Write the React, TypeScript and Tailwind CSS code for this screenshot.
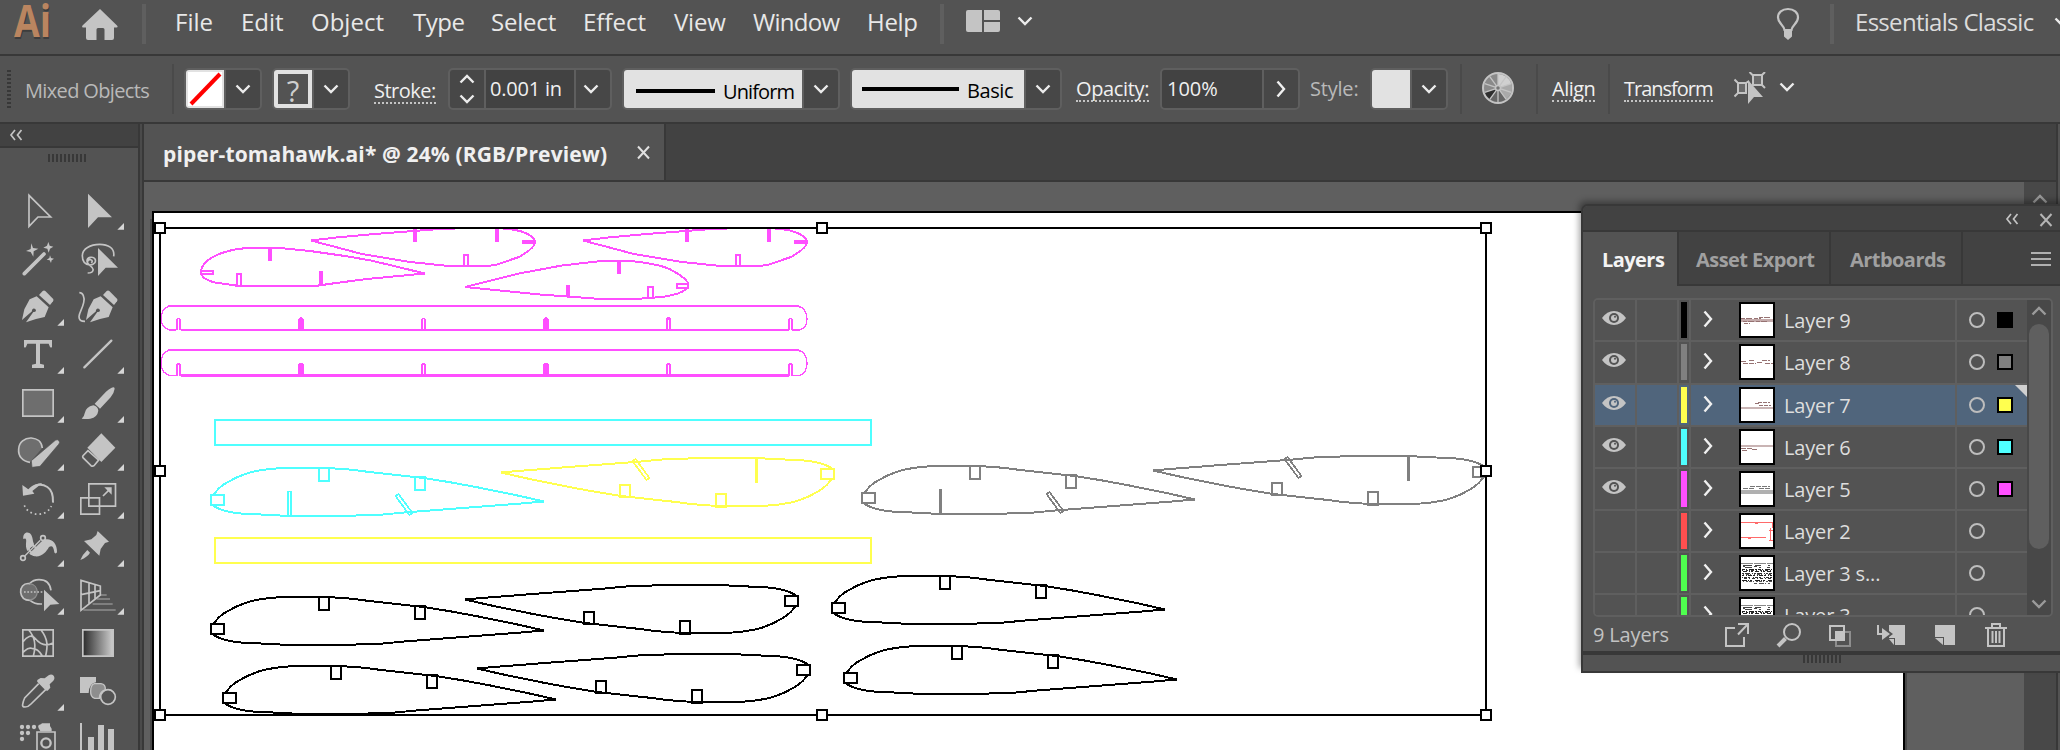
import React from "react";

const FG = "#c4c4c4";

/* ---------- small shared pieces ---------- */

function ChevronDown({ color = "#ececec" }: { color?: string }) {
  return (
    <svg width="16" height="10" viewBox="0 0 16 10" className="block shrink-0">
      <path d="M1.500 1.500L8 8l6.500-6.500" fill="none" stroke={color} strokeWidth="2.400" />
    </svg>
  );
}

function ChevronUp({ color = "#ececec" }: { color?: string }) {
  return (
    <svg width="16" height="10" viewBox="0 0 16 10" className="block shrink-0">
      <path d="M1.500 8.500L8 2l6.500 6.500" fill="none" stroke={color} strokeWidth="2.400" />
    </svg>
  );
}

function ChevronRight() {
  return (
    <svg width="10" height="18" viewBox="0 0 10 18" className="block shrink-0">
      <path d="M1.500 1.500L8 9l-6.500 7.500" fill="none" stroke="#f0f0f0" strokeWidth="2.400" />
    </svg>
  );
}

function CollapseIcon() {
  return (
    <svg width="14" height="12" viewBox="0 0 14 12" className="block shrink-0">
      <path d="M6 1L2 6l4 5M12.500 1l-4 5 4 5" fill="none" stroke={FG} strokeWidth="1.700" />
    </svg>
  );
}

function Separator() {
  return <div className="mt-2 h-[50px] w-[2px] shrink-0 bg-[#4a4a4a]" />;
}

function DropButton() {
  return (
    <div className="flex flex-1 items-center justify-center border-l-2 border-[#5f5f5f] bg-[#474747]">
      <ChevronDown />
    </div>
  );
}

/* ---------- menu bar ---------- */

function MenuBar() {
  return (
    <header className="flex h-[56px] shrink-0 border-b-2 border-[#383838] bg-[#535353] text-[24px] leading-[43px] text-[#e8e8e8]">
      <div className="w-[82px] shrink-0 pl-[14px]">
        <div className="w-[50px] origin-left scale-x-[0.83] text-[45px] leading-[40px] font-bold text-[#ba8560] [text-shadow:1px_2px_0_#3d3d3d]">Ai</div>
      </div>
      <svg width="36" height="32" viewBox="0 0 36 32" className="mt-[9px] shrink-0">
        <path d="M18 0l17 16.500q1.500 2-.5 2H32V29q0 2-2 2h-7.500V20.500q0-1.500-1.500-1.500h-5q-1.500 0-1.500 1.500V31H6q-2 0-2-2V18.500H1q-1.500 0-.5-2z" fill={FG} />
      </svg>
      <div className="mt-1 ml-6 h-10 w-1 shrink-0 bg-[#5f5f5f]" />
      <nav className="flex w-[794px] shrink-0 pl-[29px] whitespace-nowrap">
        <span className="w-[66px] shrink-0">File</span>
        <span className="w-[70px] shrink-0">Edit</span>
        <span className="w-[102px] shrink-0">Object</span>
        <span className="w-[78px] shrink-0 tracking-[-0.500px]">Type</span>
        <span className="w-[92px] shrink-0 tracking-[-0.200px]">Select</span>
        <span className="w-[91px] shrink-0">Effect</span>
        <span className="w-[79px] shrink-0 tracking-[-0.200px]">View</span>
        <span className="w-[114px] shrink-0 tracking-[-0.700px]">Window</span>
        <span className="shrink-0 tracking-[-0.300px]">Help</span>
      </nav>
      <div className="mt-1 h-10 w-1 shrink-0 bg-[#5f5f5f]" />
      <div className="mt-[10px] ml-[22px] flex w-[34px] shrink-0 gap-[2px]">
        <div className="h-[22px] w-4 rounded-l-[2px] bg-[#c4c4c4]" />
        <div className="flex flex-col gap-[2px]">
          <div className="h-[10px] w-4 rounded-tr-[2px] bg-[#c4c4c4]" />
          <div className="h-[10px] w-4 rounded-br-[2px] bg-[#c4c4c4]" />
        </div>
      </div>
      <div className="mt-4 ml-[17px] shrink-0">
        <ChevronDown />
      </div>
      <svg width="24" height="34" viewBox="0 0 24 34" className="mt-[7px] ml-[743px] shrink-0">
        <path d="M8.500 23C8 18 2 16.500 2 10.500 2 5.500 6 2 12 2s10 3.500 10 8.500c0 6-6 7.500-6.500 12.500z" fill="none" stroke={FG} strokeWidth="2.200" />
        <path d="M8 23h8v6.500L12 33l-4-3.500z" fill={FG} />
      </svg>
      <div className="mt-1 ml-[30px] h-10 w-1 shrink-0 bg-[#5f5f5f]" />
      <div className="w-[220px] shrink-0 pl-[21px] tracking-[-0.700px] whitespace-nowrap text-[#dcdcdc]">
        Essentials Classic
      </div>
      <div className="mt-[17px] shrink-0">
        <ChevronDown />
      </div>
    </header>
  );
}

/* ---------- control bar ---------- */

function OptionsBar() {
  return (
    <div className="flex h-[68px] shrink-0 items-start border-b-2 border-[#383838] bg-[#535353] text-[20px] leading-[24px] whitespace-nowrap text-[#f0f0f0]">
      <div className="mt-[14px] ml-[7px] h-[38px] w-1 shrink-0 bg-[repeating-linear-gradient(#383838_0_2px,#535353_2px_4px)]" />
      <div className="mt-[23px] ml-[14px] w-[147px] shrink-0 tracking-[-0.650px] text-[#b9b9b9]">Mixed Objects</div>
      <Separator />
      <div className="mt-3 ml-[10px] flex h-[42px] w-[78px] shrink-0 overflow-hidden rounded-[5px] border-2 border-[#5f5f5f]">
        <svg width="38" height="38" viewBox="0 0 38 38" className="shrink-0">
          <path d="M0 0h38v38H0z" fill="#e2e2e2" />
          <path d="M2 2h34v34H2z" fill="#fff" />
          <path d="M5 34L34 4" stroke="#f00" strokeWidth="4" />
        </svg>
        <DropButton />
      </div>
      <div className="mt-3 ml-[10px] flex h-[42px] w-[78px] shrink-0 overflow-hidden rounded-[5px] border-2 border-[#5f5f5f]">
        <div className="h-[38px] w-[38px] shrink-0 border-4 border-[#e2e2e2] bg-[#535353] text-center text-[29px] leading-[34px] text-[#cfcfcf]">
          ?
        </div>
        <DropButton />
      </div>
      <div className="mt-[23px] ml-[24px] w-[74px] shrink-0 tracking-[-0.500px]">
        <span className="inline-block h-[25px] border-b-2 border-dotted border-[#c4c4c4]">Stroke:</span>
      </div>
      <div className="mt-3 flex h-[42px] w-[164px] shrink-0 overflow-hidden rounded-[5px] border-2 border-[#5f5f5f] bg-[#474747]">
        <div className="flex w-[34px] shrink-0 flex-col items-center gap-[10px] pt-1">
          <ChevronUp />
          <ChevronDown />
        </div>
        <div className="w-[90px] shrink-0 border-l-2 border-[#5f5f5f] bg-[#424242] pt-[7px] pl-[4px] tracking-[-0.200px]">0.001 in</div>
        <div className="flex flex-1 items-center border-l-2 border-[#5f5f5f] pl-[7px]">
          <ChevronDown />
        </div>
      </div>
      <div className="mt-3 ml-[10px] flex h-[42px] w-[218px] shrink-0 overflow-hidden rounded-[5px] border-2 border-[#5f5f5f]">
        <div className="flex w-[178px] shrink-0 bg-[#e2e2e2] pl-3 text-black">
          <div className="mt-[19px] mr-2 h-1 w-[79px] shrink-0 bg-black" />
          <span className="pt-[10px] tracking-[-0.900px]">Uniform</span>
        </div>
        <DropButton />
      </div>
      <div className="mt-3 ml-[10px] flex h-[42px] w-[212px] shrink-0 overflow-hidden rounded-[5px] border-2 border-[#5f5f5f]">
        <div className="flex w-[172px] shrink-0 bg-[#e2e2e2] pl-[10px] text-black">
          <div className="mt-[17px] mr-2 h-1 w-[97px] shrink-0 bg-black" />
          <span className="pt-[9px] tracking-[-0.400px]">Basic</span>
        </div>
        <DropButton />
      </div>
      <div className="mt-[21px] ml-[14px] w-[84px] shrink-0 tracking-[-0.350px]">
        <span className="inline-block h-[25px] border-b-2 border-dotted border-[#c4c4c4]">Opacity:</span>
      </div>
      <div className="mt-3 flex h-[42px] w-[140px] shrink-0 overflow-hidden rounded-[5px] border-2 border-[#5f5f5f]">
        <div className="w-[100px] shrink-0 bg-[#424242] pt-[7px] pl-[5px]">100%</div>
        <div className="flex flex-1 items-center justify-center border-l-2 border-[#5f5f5f] bg-[#474747]">
          <ChevronRight />
        </div>
      </div>
      <div className="mt-[21px] ml-[10px] w-[60px] shrink-0 tracking-[-0.200px] text-[#b9b9b9]">Style:</div>
      <div className="mt-3 flex h-[42px] w-[78px] shrink-0 overflow-hidden rounded-[5px] border-2 border-[#5f5f5f]">
        <div className="w-[38px] shrink-0 bg-[#e2e2e2]" />
        <DropButton />
      </div>
      <div className="w-3 shrink-0" />
      <Separator />
      <svg width="32" height="32" viewBox="0 0 32 32" className="mt-4 ml-5 shrink-0">
        <circle cx="16" cy="16" r="15" fill="#8a8a8a" stroke="#c4c4c4" strokeWidth="2" />
        <path d="M16 16L16 2A14 14 0 0 1 29.300 11.700z" fill="#d0d0d0" />
        <path d="M16 16l13.300-4.300A14 14 0 0 1 24.200 27.300z" fill="#a9a9a9" />
        <path d="M16 16L7.800 27.300A14 14 0 0 1 2.700 20.300z" fill="#2e2e2e" />
        <path d="M16 16l8.200 11.300A14 14 0 0 1 7.800 27.300z" fill="#666" />
        <path d="M16 2v28M2.700 11.700l26.600 8.600M2.700 20.300l26.600-8.600M7.800 4.700l16.400 22.600M7.800 27.300L24.200 4.700" stroke="#c4c4c4" strokeWidth="1.300" />
        <circle cx="16" cy="16" r="2.500" fill="#777" stroke="#c4c4c4" strokeWidth="1.500" />
      </svg>
      <div className="w-[22px] shrink-0" />
      <Separator />
      <div className="mt-[21px] ml-[14px] w-[56px] shrink-0 tracking-[-0.500px]">
        <span className="inline-block h-[25px] border-b-2 border-dotted border-[#c4c4c4]">Align</span>
      </div>
      <Separator />
      <div className="mt-[21px] ml-[14px] w-[110px] shrink-0 tracking-[-1px]">
        <span className="inline-block h-[25px] border-b-2 border-dotted border-[#c4c4c4]">Transform</span>
      </div>
      <svg width="32" height="32" viewBox="0 0 32 32" className="mt-4 shrink-0">
        <path d="M4 11h8v10H4zM19 3h9v10h-9z" fill="#6a6a6a" stroke={FG} strokeWidth="2" />
        <path d="M.5 7.500l3 3M.5 24.500l3-3M15.500 0l3 3M31 0l-3 3M31 16l-3-3M12 11l3-2M19 13l-3 2" stroke={FG} strokeWidth="2" />
        <path d="M14 8v24l6-7h9z" fill={FG} />
      </svg>
      <div className="mt-[26px] ml-[13px] shrink-0">
        <ChevronDown />
      </div>
    </div>
  );
}

/* ---------- tools panel ---------- */

type Tool = { box: string; more?: boolean; art: React.ReactNode };

const line = { fill: "none", stroke: FG, strokeWidth: 5 } as const;
const solid = { fill: FG } as const;

const penNib = (
  <>
    <path {...solid} d="M128 333q4-3 8 0l23 23q3 4 0 8l-9 11-33-30z" />
    <path {...solid} d="M110 349l36 33-12 29-26 6-30 10 22-31q6 1 8-4-1-8-9-6-5 3-3 8L66 420l7-32 16-30z" />
  </>
);

const tools: Tool[] = [
  { box: "27 15 180 144", art: <path {...line} d="M87 46v93l27-28h38z" /> },
  { box: "207 15 180 144", more: true, art: <path {...solid} d="M264 41v103l30-32h42z" /> },
  {
    box: "27 159 180 144",
    art: (
      <>
        <path d="M73 281l59-59" stroke={FG} strokeWidth="11" strokeLinecap="round" />
        <path {...solid} d="M94 190l5 14 16 2-14 8-1 16-8-14-14-3 14-6zM145 186l4 11 11 3-10 6-4 12-4-12-12-3 11-6zM150 226l3 8 9 2-7 5-2 8-4-8-9-2 8-5z" />
      </>
    ),
  },
  {
    box: "207 159 180 144",
    art: (
      <>
        <path {...line} d="M341 229c4-26-18-36-42-36-28 0-52 14-52 34 0 16 8 26 22 28 14 0 20-10 16-18-6-9-24-6-24 6 0 14 22 16 18 28q-2 8-16 8M262 247q2-10 10-8 8 3 2 10" />
        <path {...solid} d="M294 204v84l23-25h37z" />
      </>
    ),
  },
  { box: "27 303 180 144", more: true, art: penNib },
  {
    box: "207 303 180 144",
    art: (
      <>
        <path {...line} d="M238 338c10 0 17 12 13 30-4 20-14 30-14 42 0 10 6 14 18 14" />
        <g transform="translate(192 0)">{penNib}</g>
      </>
    ),
  },
  {
    box: "27 447 180 144",
    more: true,
    art: <path {...solid} d="M72 480h84v21q-2 3-6 0l-4-10h-26v60l12 3v10H96v-10l12-3v-60H82l-4 10q-4 3-6 0z" />,
  },
  {
    box: "207 447 180 144",
    more: true,
    art: <path d="M253 562l81-80" stroke={FG} strokeWidth="7" strokeLinecap="round" />,
  },
  {
    box: "27 594 180 144",
    more: true,
    art: <path d="M68.500 629.500h91v79h-91z" fill="#6e6e6e" stroke={FG} strokeWidth="5" />,
  },
  {
    box: "207 594 180 144",
    more: true,
    art: (
      <>
        <path {...solid} d="M335 623q8-4 9 3-2 14-12 26l-32 34-16-15 34-36q8-8 17-12z" />
        <path {...solid} d="M280 676q14 4 15 16-3 20-24 24-12 2-26 0 8-6 9-16 4-20 26-24z" />
      </>
    ),
  },
  {
    box: "27 738 180 144",
    more: true,
    art: (
      <>
        <path d="M90 847c-22-3-36-18-34-40 1-20 18-34 38-33 17 1 31 11 33 30z" fill="#6e6e6e" />
        <path {...line} d="M90 847c-22-3-36-18-34-40 1-20 18-34 38-33 17 1 31 11 33 30" />
        <path {...solid} d="M166 781q6-4 11 1 4 6-1 11l-56 66-24 3-2-20z" stroke="#535353" strokeWidth="2" />
      </>
    ),
  },
  {
    box: "207 738 180 144",
    more: true,
    art: (
      <>
        <path {...solid} d="M304 760l42 43-42 43-42-43z" />
        <path {...line} d="M264 812l-15 15q-2 3 0 6l24 24q5 3 9 0l14-17z" />
      </>
    ),
  },
  {
    box: "27 42 180 144",
    more: true,
    art: (
      <>
        <path d="M86 91c14-18 38-22 56-10 14 9 18 24 17 47" fill="none" stroke={FG} strokeWidth="6" />
        <path {...solid} d="M67 75l20 14q16-19 40-20l-30 24 6 8-34 6z" />
        <path d="M73 136C86 170 140 172 154 138" fill="none" stroke={FG} strokeWidth="5" strokeDasharray="5 9" />
      </>
    ),
  },
  {
    box: "207 42 180 144",
    more: true,
    art: (
      <>
        <path {...line} d="M266.500 71.500h80v67h-80zM242.500 113.500h56v49h-56zM309 108l20-20" />
        <path {...solid} d="M313 82h22v22z" />
      </>
    ),
  },
  {
    box: "27 186 180 144",
    more: true,
    art: (
      <>
        <path {...solid} d="M70 237c-3-18 14-26 24-12 6 12 3 20 10 30 8 3 16-10 28-16 22-6 40 10 39 38-2 5-7 4-8 0-2-18-8-22-16-16-8 14-20 30-42 28-14-2-22-10-26-24-3-16 2-24-2-28-2-3-4 0-7 0z" />
        <path d="M72 290l52-52" stroke="#535353" strokeWidth="9" />
        <path {...line} d="M75 287l46-46" strokeWidth={4} />
        <circle {...line} cx="69" cy="294" r="7" />
        <circle {...line} cx="129" cy="234" r="7" />
        <circle {...line} cx="97" cy="267" r="10" />
      </>
    ),
  },
  {
    box: "207 186 180 144",
    more: true,
    art: (
      <>
        <path {...solid} d="M293 213l34 32-12 4-13 18-4 20-46-44 22-5 15-13z" />
        <path {...solid} d="M262 270l8 8q-6 12-29 22 6-16 21-30z" />
      </>
    ),
  },
  {
    box: "27 330 180 144",
    more: true,
    art: (
      <>
        <circle cx="86" cy="396" r="25" fill="#6e6e6e" />
        <path {...line} d="M153 391c-3-22-18-32-36-32-14 0-22 5-28 12-20-3-28 13-27 26 2 18 14 24 28 24 10 8 18 12 36 11" />
        <path d="M89 371c30 4 30 46 0 49" fill="none" stroke="#8e8e8e" strokeWidth="4" />
        <path d="M72 396h58" stroke={FG} strokeWidth="5" strokeDasharray="5 5" />
        <path {...solid} d="M132 389v65l19-20 27-2z" />
      </>
    ),
  },
  {
    box: "207 330 180 144",
    more: true,
    art: (
      <>
        <path d="M302 405h18M290 417h40M278 432h60M250 450h97" stroke="#8e8e8e" strokeWidth="5" />
        <path {...line} d="M243 361l58 17v27l-58 46zM267 369v62M285 374v45M243 404l58-12" />
      </>
    ),
  },
  {
    box: "27 474 180 144",
    art: (
      <path {...line} d="M68.500 509.500h91v79h-91zM86 510c22 24 22 50 14 78M123 510c22 28 20 50 14 78M69 545c12-16 26-22 36-10 18 22 36 24 54 14M69 577c10-8 14-16 26-12 16 0 26 12 32 23" />
    ),
  },
  {
    box: "207 474 180 144",
    art: (
      <>
        <defs>
          <linearGradient id="toolGradient">
            <stop offset="0" stopColor="#2b2b2b" />
            <stop offset="1" stopColor="#cfcfcf" />
          </linearGradient>
        </defs>
        <path d="M248.500 509.500h91v79h-91z" fill="url(#toolGradient)" stroke={FG} strokeWidth="5" />
      </>
    ),
  },
  {
    box: "27 618 180 144",
    more: true,
    art: (
      <>
        <path {...solid} d="M146 646q8-6 15 1 5 8-1 15l-11 11 2 10-8 9q-5 1-8-3l-22-22q-4-5 0-8l9-5 12 1z" />
        <path {...line} d="M116 671l-42 43q-4 8-6 19-2 8 7 8 10 0 18-9l44-43" />
      </>
    ),
  },
  {
    box: "207 618 180 144",
    art: (
      <>
        <path {...solid} d="M240 651h48v16q-20 2-22 32h-26z" />
        <path d="M283 671h20q14 2 13 18-18 6-18 26h-14q-13-4-12-22 0-18 11-22z" fill="#8e8e8e" stroke={FG} strokeWidth="4" />
        <circle cx="324" cy="711" r="22" fill="#535353" stroke={FG} strokeWidth="5" />
      </>
    ),
  },
  {
    box: "27 762 180 144",
    art: (
      <>
        <path {...solid} d="M126 790h24v8l5 8v8h-34l-4-8v-8z" />
        <path {...line} d="M111 816h54v80h-54z" />
        <circle cx="138" cy="849" r="14" fill="none" stroke={FG} strokeWidth="7" />
        <g {...solid}>
          <circle cx="66" cy="801" r="6.500" />
          <circle cx="84" cy="801" r="6.500" />
          <circle cx="102" cy="801" r="6.500" />
          <circle cx="66" cy="819" r="6.500" />
          <circle cx="84" cy="819" r="6.500" />
          <circle cx="66" cy="837" r="6.500" />
          <circle cx="121" cy="800" r="6.500" />
        </g>
      </>
    ),
  },
  {
    box: "207 762 180 144",
    art: <path {...solid} d="M240 789h6v100h-6zM264 831h18v60h-18zM294 795h18v96h-18zM324 807h18v84h-18z" />,
  },
];

function ToolsPanel() {
  return (
    <aside className="flex w-[138px] shrink-0 flex-col bg-[#535353]">
      <div className="flex h-6 shrink-0 border-b-2 border-[#383838] bg-[#424242] pt-[5px] pl-[9px]">
        <CollapseIcon />
      </div>
      <div className="mt-[6px] ml-12 h-2 w-[38px] shrink-0 bg-[repeating-linear-gradient(90deg,#383838_0_2px,#535353_2px_4px)]" />
      <div className="mt-[23px] ml-[9px] grid w-[120px] shrink-0 grid-cols-[60px_60px] gap-0">
        {tools.map((t, i) => (
          <div key={i} className={i === 8 || i === 9 ? "flex h-[49px] items-end" : "flex h-12 items-end"}>
            <svg width="60" height="48" viewBox={t.box} className="block">
              {t.art}
              {t.more && (
                <path
                  fill="#d6d6d6"
                  d="M0 0v-20l-20 20z"
                  transform={`translate(${Number(t.box.split(" ")[0]) + 165} ${Number(t.box.split(" ")[1]) + 134})`}
                />
              )}
            </svg>
          </div>
        ))}
      </div>
    </aside>
  );
}

/* ---------- artboard ---------- */

const RIB =
  "M213 496C217 489 221 486 226 483Q236 477 248 473Q262 469 284 468L325 468Q350 469 369 472L424 478Q450 482 476 487L520 496L544 501.500L521 503.500L476 507L404 512.500L378 515L335 516L290 516L241 513.500Q222 512 212 505";

function Rib({ dx = 0, dy = 0, flip = false, color, struts }: { dx?: number; dy?: number; flip?: boolean; color: string; struts?: "hollow" | "filled" }) {
  const place = flip ? `translate(${1045 + dx} ${974 + dy}) rotate(180)` : `translate(${dx} ${dy})`;
  return (
    <g transform={place} fill="none" stroke={color} strokeWidth="2">
      <path d={RIB} strokeWidth="2" />
      <path d="M211 495h13v10h-13zM319 467.500h10v13h-10zM415 477h10v12.500h-10z" />
      {struts === "hollow" && <path d="M288 516v-24.500h3V516" strokeWidth="1.600" />}
      {struts === "filled" && <path d="M289 491v25" strokeWidth="3" />}
      {struts && <path d="M395.500 496l14 19 3-2L398.500 494z" strokeWidth="1.700" />}
    </g>
  );
}

const SLOTS = [178.500, 301, 423.500, 546, 668.500, 790.500];

function Spar({ top, bottom, base }: { top: number; bottom: number; base: number }) {
  return (
    <g fill="none" stroke="#ff4fff">
      <path d={`M169 ${top}H798`} strokeWidth="2" />
      <path d={`M181 ${bottom}H789`} strokeWidth={base} />
      <path
        d={`M169 ${top}Q161 ${top + 3} 161 ${top + 13}Q161 ${bottom - 2} 170 ${bottom}H176M798 ${top}Q807 ${top + 3} 807 ${top + 13}Q807 ${bottom - 2} 799 ${bottom}H792`}
        strokeWidth="1.400"
      />
      {SLOTS.map((x, i) => (
        <path
          key={x}
          d={`M${x - 1.500} ${bottom}v-10.500l1-1h1l1 1v10.500`}
          strokeWidth={i === 0 || i === 5 || i === 2 ? "1.600" : "2.200"}
        />
      ))}
    </g>
  );
}

const WING_TOP =
  "M311 240.500L336 237.500L375 234L414 231L440 229L470 228H490Q512 228 523 232Q534 236 535 242Q535 248 519 257L497 264.500L488 266H449L410 262L362 254ZM414 229h2v12h-2zM496 229h2v12h-2zM523 241h12v2h-12zM463.500 266v-11h4v11";
const WING_LEFT =
  "M201 272Q202 260 222 253Q236 248 252 248H280L310 251L345 256L371 260.500L425 273.500L367 279L336 283L315 286H239L215 282.500Q201 279 201 272ZM269 248h2v12h-2zM201 270.500h12v3.500h-12zM237 286v-12h4v12M320 284v-12h2v12";
const WING_LOW =
  "M465 287L519 273.500L562 265.500L601 261H630Q662 264 673 271Q688 279 688.500 285Q688 293 662 297L636 299H601L540 294.500ZM618 261h2v12h-2zM677 284h11v4h-11zM567 297v-11h2v11M648 298v-11h4.500v11";

function Canvas() {
  const handles = [
    [160, 228], [822, 228], [1486, 228],
    [160, 471], [1486, 471],
    [160, 715], [822, 715], [1486, 715],
  ];
  return (
    <svg width="1880" height="568" viewBox="144 182 1880 568" className="block shrink-0 bg-[#5f5f5f]" shapeRendering="crispEdges">
      <path d="M150 219h1757v531H150z" fill="#484848" />
      <path d="M152 211h1753v539H152z" fill="#000" />
      <path d="M154 213h1749v537H154z" fill="#fff" />
      <g fill="none" stroke="#ff4fff" strokeWidth="2">
        <path d={WING_TOP} />
        <path d={WING_TOP} transform="translate(272 0)" />
        <path d={WING_LEFT} />
        <path d={WING_LOW} />
      </g>
      <Spar top={306} bottom={330} base={2} />
      <Spar top={350} bottom={375.500} base={3} />
      <path d="M215 420h656v25H215z" fill="none" stroke="#4fffff" strokeWidth="2" />
      <path d="M215 538h656v25H215z" fill="none" stroke="#ffff4f" strokeWidth="2" />
      <Rib color="#4fffff" struts="hollow" />
      <Rib color="#ffff4f" flip struts="filled" />
      <Rib color="#808080" dx={651} dy={-2} struts="filled" />
      <Rib color="#808080" dx={652} dy={-2} flip struts="filled" />
      <Rib color="#000" dy={129} />
      <Rib color="#000" dx={12} dy={198} />
      <Rib color="#000" dx={621} dy={108} />
      <Rib color="#000" dx={633} dy={178} />
      <Rib color="#000" dx={-36} dy={127} flip />
      <Rib color="#000" dx={-24} dy={196} flip />
      <path d="M160 228h1326v487H160z" fill="none" stroke="#000" strokeWidth="2" />
      {handles.map(([x, y]) => (
        <rect key={`${x}-${y}`} x={x - 5} y={y - 5} width="10" height="10" fill="#fff" stroke="#000" strokeWidth="2" />
      ))}
    </svg>
  );
}

function DocumentArea() {
  return (
    <main className="flex w-[1912px] shrink-0 flex-col">
      <div className="flex h-[58px] shrink-0 border-b-2 border-[#383838] bg-[#424242]">
        <div className="flex w-[522px] shrink-0 border-r-2 border-[#383838] bg-[#535353] pl-[19px]">
          <span className="w-[473px] shrink-0 pt-[4px] text-[21px] leading-[53px] font-bold tracking-[0.130px] whitespace-nowrap text-[#f0f0f0]">
            piper-tomahawk.ai* @ 24% (RGB/Preview)
          </span>
          <svg width="15" height="15" viewBox="0 0 15 15" className="mt-[21px] shrink-0">
            <path d="M2 1.500l11 12M13 1.500l-11 12" stroke="#e0e0e0" strokeWidth="2" />
          </svg>
        </div>
      </div>
      <div className="flex h-[568px] shrink-0">
        <Canvas />
        <div className="flex w-8 shrink-0 flex-col items-center bg-[#484848] pt-3">
          <ChevronUp color="#9a9a9a" />
        </div>
      </div>
    </main>
  );
}

/* ---------- layers panel ---------- */

function Eye({ hole }: { hole: string }) {
  return (
    <svg width="24" height="14" viewBox="0 0 24 14" className="block">
      <path d="M0 7Q5 0 12 0t12 7q-5 7-12 7T0 7z" fill={FG} />
      <circle cx="12" cy="7" r="5" fill={hole} />
      <circle cx="12" cy="7" r="3" fill={FG} />
      <circle cx="13" cy="5.800" r="1" fill={hole} />
    </svg>
  );
}

const denseSheet = (
  <>
    <path d="M0 6.500h32" stroke="#888" strokeDasharray="12 1" />
    <path d="M2 8.500h9M14 8.500h6M27 8.500h2M4 10.500h7M13 9.500h3M2 9.500h2M26 10.500h3M18 10.500h2" stroke="#444" />
    <path d="M1 12.500h30" stroke="#222" strokeDasharray="3 1 1 2 5 1 2 1" />
    <path d="M1 13.500h30" stroke="#333" strokeDasharray="1 3 2 1 1 1 3 2" />
    <path d="M2 14.500h29" stroke="#222" strokeDasharray="4 2 1 1 2 2" />
    <path d="M1 16.500h30" stroke="#333" strokeDasharray="2 1 5 2 1 1" />
    <path d="M2 17.500h29" stroke="#555" strokeDasharray="1 2 3 1 1 3" />
    <path d="M1 18.500h30" stroke="#222" strokeDasharray="2 2 1 1 4 1" />
    <path d="M1 20.500h30" stroke="#333" strokeDasharray="1 1 3 1 2 3" />
    <path d="M3 21.500h27" stroke="#333" strokeDasharray="3 2 1 2" />
    <path d="M1 23.500h30" stroke="#222" strokeDasharray="5 1 1 1 2 3" />
    <path d="M2 24.500h29" stroke="#555" strokeDasharray="1 2 2 1 3 1" />
    <path d="M13 26.500h16" stroke="#555" strokeDasharray="3 2 5 1 1 2" />
  </>
);

const layers = [
  {
    name: "Layer 9", color: "bg-black", eye: true, swatch: true,
    art: <><path d="M0 16.500h32" stroke="#c4abab" strokeWidth="3" /><path d="M0 14.500h20M2 17.500h26M18 13.500h12M3 19.500h6" stroke="#967272" strokeDasharray="4 1 6 2" /></>,
  },
  {
    name: "Layer 8", color: "bg-[#808080]", eye: true, swatch: true,
    art: <path d="M0 15.500h6M8 14.500h6M2 17.500h13M16 16.500h6M21 14.500h8M24 17.500h8" stroke="#967272" strokeDasharray="5 1" />,
  },
  {
    name: "Layer 7", color: "bg-[#ffff4f]", eye: true, swatch: true,
    art: <><path d="M14 14.500h5M17 13.500h12M18 16.500h12" stroke="#967272" strokeDasharray="4 1" /><path d="M0 18.500h32" stroke="#c9b4b4" strokeWidth="2" /></>,
  },
  {
    name: "Layer 6", color: "bg-[#4fffff]", eye: true, swatch: true,
    art: <><path d="M0 14.500h32" stroke="#c9b4b4" strokeWidth="2" /><path d="M0 17.500h11M1 19.500h6M11 18.500h5" stroke="#967272" strokeDasharray="5 1" /></>,
  },
  {
    name: "Layer 5", color: "bg-[#ff4fff]", eye: true, swatch: true,
    art: <><path d="M2 15.500h12M9 13.500h20M18 15.500h12" stroke="#777" strokeDasharray="5 1" /><path d="M0 18.500h32" stroke="#b0b0b0" strokeWidth="4" /></>,
  },
  {
    name: "Layer 2", color: "bg-[#ff4f4f]", eye: false, swatch: false,
    art: <path d="M0 7.500h32M14 8.500h3M31.500 7v6M29.500 13v12M0 22.500h25M7 23.500h3M28 15.500h4M28 25.500h4" stroke="#ff6a6a" />,
  },
  { name: "Layer 3 s...", color: "bg-[#4fff4f]", eye: false, swatch: false, art: denseSheet },
  { name: "Layer 3", color: "bg-[#4fff4f]", eye: false, swatch: false, art: denseSheet },
];

function LayerRow({ index }: { index: number }) {
  const layer = layers[index];
  const active = index === 2;
  return (
    <div
      className={
        "flex shrink-0 border-b-2 border-[#5f5f5f] " +
        (index === 1 ? "h-[43px] " : "h-[42px] ") +
        (active ? "bg-[#50657c]" : "bg-[#535353]")
      }
    >
      <div className="w-10 shrink-0 pt-[11px] pl-[7px]">{layer.eye && <Eye hole={active ? "#50657c" : "#535353"} />}</div>
      <div className="w-11 shrink-0 border-x-2 border-[#5f5f5f]" />
      <div className="h-full w-[10px] shrink-0 px-[2px] py-[2px]">
        <div className={"h-9 w-[6px] " + layer.color} />
      </div>
      <div className="flex w-[268px] shrink-0 border-x-2 border-[#5f5f5f] pl-3">
        <div className="mt-[10px] w-9 shrink-0">
          <ChevronRight />
        </div>
        <div className="mt-[2px] h-9 w-9 shrink-0 border-2 border-black bg-white">
          <svg width="32" height="32" viewBox="0 0 32 32" fill="none" className="block" shapeRendering="crispEdges">
            {layer.art}
          </svg>
        </div>
        <span className="pl-[9px] text-[20px] leading-[41px] tracking-[-0.150px] whitespace-nowrap text-[#dedede]">{layer.name}</span>
      </div>
      <div className="flex flex-1 pl-3">
        <div className="mt-3 mr-3 h-4 w-4 shrink-0 rounded-full border-2 border-[#bdbdbd]" />
        {layer.swatch && <div className={"mt-3 h-4 w-4 shrink-0 border-2 border-black " + layer.color} />}
        {active && (
          <svg width="12" height="12" viewBox="0 0 12 12" className="ml-auto shrink-0">
            <path d="M0 0h12v12z" fill="#d0d0d0" />
          </svg>
        )}
      </div>
    </div>
  );
}

function LayersPanel() {
  return (
    <section className="absolute top-[204px] left-[1581px] flex h-[469px] w-[490px] flex-col rounded-tl-[7px] border-2 border-[#383838] bg-[#535353] shadow-[-3px_-4px_6px_-1px_rgba(0,0,0,0.35)]">
      <div className="flex h-[26px] shrink-0 rounded-tl-[5px] border-b-2 border-[#383838] bg-[#424242] pt-[7px] pl-[422px]">
        <CollapseIcon />
        <svg width="14" height="14" viewBox="0 0 14 14" className="ml-[20px] shrink-0">
          <path d="M1.500 1l11 12M12.500 1l-11 12" stroke="#b5b5b5" strokeWidth="2" />
        </svg>
      </div>
      <div className="flex h-[54px] shrink-0 bg-[#535353] text-[20px] leading-[56px] font-bold tracking-[-0.550px] whitespace-nowrap text-[#a0a0a0]">
        <div className="w-[94px] shrink-0 pl-[19px] text-[#f4f4f4]">Layers</div>
        <div className="w-[154px] shrink-0 border-x-2 border-b-2 border-[#383838] bg-[#424242] pl-[17px]">Asset Export</div>
        <div className="w-[132px] shrink-0 border-r-2 border-b-2 border-[#383838] bg-[#424242] pl-[19px]">Artboards</div>
        <div className="flex-1 border-b-2 border-[#383838] bg-[#424242] pt-5 pl-[68px]">
          <div className="h-[2px] w-5 bg-[#b0b0b0]" />
          <div className="mt-1 h-[2px] w-5 bg-[#b0b0b0]" />
          <div className="mt-1 h-[2px] w-5 bg-[#b0b0b0]" />
        </div>
      </div>
      <div className="mt-3 ml-[10px] flex h-[319px] w-[460px] shrink-0 overflow-hidden rounded-[5px] border-2 border-[#5f5f5f]">
        <div className="flex w-[432px] shrink-0 flex-col">
          {layers.map((l, i) => (
            <LayerRow key={l.name} index={i} />
          ))}
        </div>
        <div className="flex flex-1 flex-col items-center bg-[#484848] pt-[6px]">
          <ChevronUp color="#9a9a9a" />
          <div className="mt-2 h-[225px] w-5 shrink-0 rounded-full bg-[#5f5f5f]" />
          <div className="mt-[50px]">
            <ChevronDown color="#9a9a9a" />
          </div>
        </div>
      </div>
      <div className="flex h-[38px] shrink-0 border-b-4 border-[#383838] pt-[6px]">
        <span className="w-[142px] shrink-0 pl-[10px] text-[20px] leading-[24px] tracking-[-0.150px] whitespace-nowrap text-[#c2c2c2]">9 Layers</span>
        <svg width="24" height="25" viewBox="0 0 24 25" fill="none" stroke={FG} strokeWidth="2" className="shrink-0">
          <path d="M10 5H1v18h18v-9M13 1h10v10M22.500 1.500L13 11.500" />
        </svg>
        <svg width="26" height="25" viewBox="0 0 26 25" fill="none" stroke={FG} className="ml-[27px] shrink-0">
          <circle cx="16" cy="9" r="8" strokeWidth="2" />
          <path d="M9.500 15.500L2 23" strokeWidth="4" />
        </svg>
        <svg width="23" height="25" viewBox="0 0 23 25" fill="none" className="ml-[27px] shrink-0">
          <path d="M7 9h14v14H7z" stroke="#8e8e8e" strokeWidth="2" />
          <path d="M6 8h10v10H6z" fill={FG} />
          <path d="M1 3h14v14H1z" stroke={FG} strokeWidth="2" />
        </svg>
        <svg width="28" height="25" viewBox="0 0 28 25" className="ml-[25px] shrink-0">
          <path d="M1 2v9h6" fill="none" stroke={FG} strokeWidth="2" />
          <path d="M5 5l8 6-8 6z" fill={FG} />
          <path d="M12 2h16v20H18v-7h-6v-1l4-3-4-3z" fill={FG} />
          <path d="M12 16h5v6z" fill={FG} />
        </svg>
        <svg width="20" height="25" viewBox="0 0 20 25" className="ml-[30px] shrink-0">
          <path d="M0 2h20v20H9v-8H0z" fill={FG} />
          <path d="M0 15h8v7z" fill={FG} />
        </svg>
        <svg width="22" height="25" viewBox="0 0 22 25" fill="none" stroke={FG} strokeWidth="2" className="ml-[30px] shrink-0">
          <path d="M0 5h22M7 5V1h8v4M3 5v18h16V5M7.500 8v12M11 8v12M14.500 8v12" />
        </svg>
      </div>
      <div className="ml-[220px] h-2 w-[38px] shrink-0 bg-[repeating-linear-gradient(90deg,#383838_0_2px,#535353_2px_4px)]" />
    </section>
  );
}

export default function App() {
  return (
    <div className="relative flex h-[750px] w-[2060px] flex-col overflow-hidden bg-[#535353] font-['Open_Sans',sans-serif]">
      <MenuBar />
      <OptionsBar />
      <div className="flex h-[626px] shrink-0">
        <ToolsPanel />
        <div className="w-[6px] shrink-0 border-x-2 border-[#383838] bg-[#4a4a4a]" />
        <DocumentArea />
        <div className="w-[2px] shrink-0 bg-[#383838]" />
      </div>
      <LayersPanel />
    </div>
  );
}
